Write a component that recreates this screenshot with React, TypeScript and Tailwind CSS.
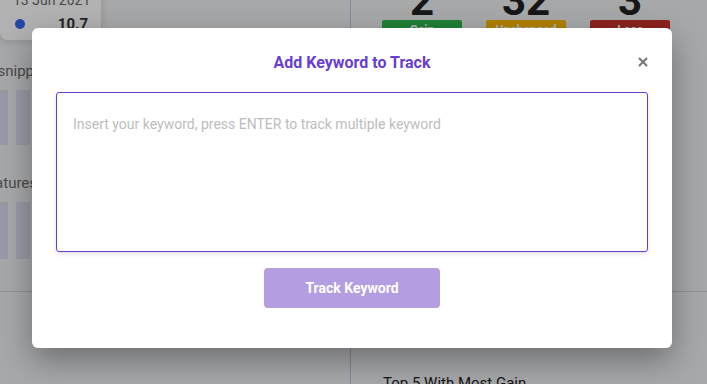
import { X } from "lucide-react";

export default function App() {
  return (
    <div className="relative h-[384px] w-[707px] overflow-hidden bg-[#f0f1f4] font-['Roboto',sans-serif]">
      {/* dashboard behind the dialog */}
      <div className="flex h-full">
        <div className="relative w-[350px] shrink-0">
          <div className="h-[292px] border-b border-[#cfd1da]">
            {/* chart tooltip */}
            <div className="absolute left-0 top-[-24px] flex h-[64px] w-[101px] flex-col gap-[4px] rounded-lg bg-white px-[13px] pt-[14px] shadow-[0_2px_8px_rgba(0,0,0,0.15)]">
              <span className="whitespace-nowrap text-[14px] leading-[20px] text-[#6b6b6b]">13 Jun 2021</span>
              <div className="flex items-center justify-between">
                <span className="ml-[2px] h-[10px] w-[10px] rounded-full bg-[#3266ee]" />
                <span className="text-[15px] font-bold leading-[20px] text-[#333]">10.7</span>
              </div>
            </div>
            <div className="overflow-hidden pt-[62px]">
              <p className="-ml-[65px] whitespace-nowrap text-[15px] leading-[18px] text-[#6a6a6a]">Featured snippet</p>
            </div>
            <div className="mt-[10px] flex h-[55px] gap-[8px]">
              <div className="w-[8px] bg-[#dadff0]" />
              <div className="w-[14px] bg-[#dadff0]" />
              <div className="w-[14px] bg-[#dadff0]" />
            </div>
            <div className="overflow-hidden pt-[29px]">
              <p className="-ml-[21px] whitespace-nowrap text-[15px] leading-[18px] text-[#6a6a6a]">Features</p>
            </div>
            <div className="mt-[10px] flex h-[57px] gap-[8px]">
              <div className="w-[8px] bg-[#dadff0]" />
              <div className="w-[14px] bg-[#dadff0]" />
              <div className="w-[14px] bg-[#dadff0]" />
            </div>
          </div>
        </div>
        <div className="flex-1 border-l border-[#c3bfe0]">
          <div className="flex h-[292px] flex-col border-b border-[#cfd1da]">
            <div className="-mt-[19px] flex gap-[24px] pl-[31px]">
              {[
                { n: "2", label: "Gain", bg: "bg-[#2db84d]" },
                { n: "32", label: "Unchanged", bg: "bg-[#fdb900]" },
                { n: "3", label: "Loss", bg: "bg-[#c8322a]" },
              ].map((s) => (
                <div key={s.label} className="flex w-[80px] flex-col items-center">
                  <span className="text-[42px] font-bold leading-[40px] text-[#222]">{s.n}</span>
                  <span className={`-mt-px flex h-[20px] w-full items-center justify-center rounded-[2px] text-[12px] font-bold text-white ${s.bg}`}>
                    {s.label}
                  </span>
                </div>
              ))}
            </div>
          </div>
          <p className="pl-[32px] pt-[80px] text-[15px] text-[#222]">Top 5 With Most Gain</p>
        </div>
      </div>

      {/* dialog */}
      <div className="absolute inset-0 bg-black/30 pl-[32px] pt-[28px]">
        <div className="relative flex h-[320px] w-[640px] flex-col items-center rounded-md bg-white px-6 pt-[23px] shadow-[0_12px_32px_rgba(0,0,0,0.35)]">
          <h2 className="text-[16px] font-bold leading-[24px] text-[#6a3dd1]">Add Keyword to Track</h2>
          <button className="absolute right-[22px] top-[27px] text-[#777]">
            <X size={14} strokeWidth={3.5} />
          </button>
          <textarea
            className="mt-[17px] h-[160px] w-full resize-none rounded-[3px] border border-[#6a3dd1] px-4 pt-[20px] text-[14px] leading-[22px] text-[#333] shadow-[0_2px_4px_rgba(0,0,0,0.12)] outline-none placeholder:text-[#bdbdbd]"
            placeholder="Insert your keyword, press ENTER to track multiple keyword"
          />
          <button className="mt-[16px] h-[40px] w-[176px] rounded-[4px] bg-[#b39ee2] text-[14px] font-bold text-white">
            Track Keyword
          </button>
        </div>
      </div>
    </div>
  );
}
